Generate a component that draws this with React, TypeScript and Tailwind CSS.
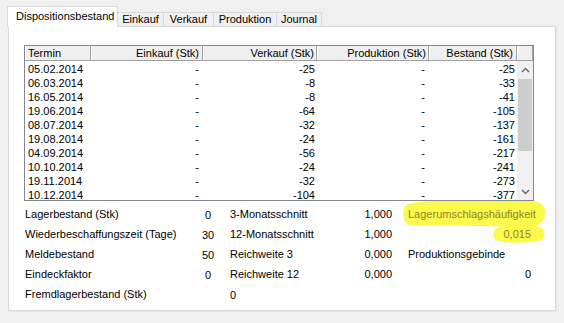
import React from "react";

const rows: [string, string, string][] = [
  ["05.02.2014", "-25", "-25"],
  ["06.03.2014", "-8", "-33"],
  ["16.05.2014", "-8", "-41"],
  ["19.06.2014", "-64", "-105"],
  ["08.07.2014", "-32", "-137"],
  ["19.08.2014", "-24", "-161"],
  ["04.09.2014", "-56", "-217"],
  ["10.10.2014", "-24", "-241"],
  ["19.11.2014", "-32", "-273"],
  ["10.12.2014", "-104", "-377"],
];

const hdr =
  "h-full flex items-center border-r border-[#a0a0a0] bg-[#efefef] shadow-[inset_1px_0_0_#ffffff]";

function Chevron({ up }: { up?: boolean }) {
  return (
    <svg width="9" height="6" viewBox="0 0 9 6">
      <polyline
        points={up ? "1,5 4.5,1.5 8,5" : "1,1 4.5,4.5 8,1"}
        fill="none"
        stroke="#606060"
        strokeWidth="1.3"
      />
    </svg>
  );
}

export default function App() {
  return (
    <div className="w-[564px] h-[323px] bg-[#f0f0f0] overflow-hidden text-[11px] text-black font-['Liberation_Sans',Arial,sans-serif] pt-[6px] pl-[7px]">
      {/* Tabs */}
      <div className="flex items-end h-[20px] relative z-10">
        <div className="w-[111px] h-[21px] -mb-px bg-white border border-b-0 border-[#d9d9d9] pl-[8px] pt-[4px] leading-[11px]">
          Dispositionsbestand
        </div>
        <div className="w-[46px] h-[14px] border-t border-r border-[#d9d9d9] text-center leading-[11px] pt-px">
          Einkauf
        </div>
        <div className="w-[50px] h-[14px] border-t border-r border-[#d9d9d9] text-center leading-[11px] pt-px">
          Verkauf
        </div>
        <div className="w-[63px] h-[14px] border-t border-r border-[#d9d9d9] text-center leading-[11px] pt-px">
          Produktion
        </div>
        <div className="w-[45px] h-[14px] border-t border-r border-[#d9d9d9] text-center leading-[11px] pt-px">
          Journal
        </div>
      </div>

      {/* Panel */}
      <div className="ml-px w-[548px] h-[285px] bg-white border border-[#d9d9d9] shadow-[1px_1px_0_#e6e6e6] pl-[15px] pt-[18px]">
        {/* Table */}
        <div className="w-[510px] h-[156px] border border-[#828790] overflow-hidden flex flex-col">
          <div className="flex h-[15px] border-b border-[#a0a0a0] leading-[14px] shrink-0">
            <div className={`${hdr} w-[66px] pl-[3px]`}>Termin</div>
            <div className={`${hdr} w-[112px] justify-end pr-[3px]`}>Einkauf (Stk)</div>
            <div className={`${hdr} w-[114px] justify-end pr-[2px]`}>Verkauf (Stk)</div>
            <div className={`${hdr} w-[112px] justify-end pr-[2px]`}>Produktion (Stk)</div>
            <div className={`${hdr} w-[88px] justify-end pr-[3px]`}>Bestand (Stk)</div>
            <div className={`${hdr} w-[16px]`}></div>
          </div>
          <div className="flex flex-1 overflow-hidden">
            <div className="w-[492px] pt-px">
              {rows.map(([d, v, b]) => (
                <div key={d} className="flex h-[14px] leading-[14px]">
                  <div className="w-[66px] pl-[3px]">{d}</div>
                  <div className="w-[112px] text-right pr-[4px]">-</div>
                  <div className="w-[114px] text-right pr-[2px]">{v}</div>
                  <div className="w-[112px] text-right pr-[4px]">-</div>
                  <div className="w-[88px] text-right pr-[2px]">{b}</div>
                </div>
              ))}
            </div>
            <div className="w-[16px] bg-[#f0f0f0] flex flex-col">
              <div className="h-[17px] flex items-center justify-center">
                <Chevron up />
              </div>
              <div className="h-[72px] mt-px mx-px bg-[#cdcdcd]"></div>
              <div className="flex-1"></div>
              <div className="h-[17px] flex items-center justify-center">
                <Chevron />
              </div>
            </div>
          </div>
        </div>

        {/* Bottom info */}
        <div className="relative">
          <svg
            className="absolute left-0 top-0"
            width="540"
            height="110"
            viewBox="24 201 540 110"
          >
            <path
              d="M408,204 C420,200 470,199 520,199 C540,199 546,206 545,214 C544,224 536,228 525,227 C490,226 440,226 410,225 C402,224 401,206 408,204 Z"
              fill="#fbf94c"
            />
            <path
              d="M500,227 C510,225 535,224 542,228 C547,233 544,242 535,242 C520,243 505,243 498,241 C491,238 492,229 500,227 Z"
              fill="#fbf94c"
            />
          </svg>
          <div className="relative pt-[3px] pl-px">
            {[
              ["Lagerbestand (Stk)", "0", "3-Monatsschnitt", "1,000", "lag"],
              ["Wiederbeschaffungszeit (Tage)", "30", "12-Monatsschnitt", "1,000", "val"],
              ["Meldebestand", "50", "Reichweite 3", "0,000", "prod"],
              ["Eindeckfaktor", "0", "Reichweite 12", "0,000", "zero"],
            ].map(([l, v, l3, v3, k]) => (
              <div key={l} className="flex h-[20px] items-center">
                <div className="w-[171px]">{l}</div>
                <div className="w-[24px] text-center mt-[3px]">{v}</div>
                <div className="w-[162px] ml-[10px] flex justify-between">
                  <span>{l3}</span>
                  <span>{v3}</span>
                </div>
                <div className="w-[123px] ml-[16px]">
                  {k === "lag" && (
                    <span className="text-[#8f8620]">Lagerumschlagshäufigkeit</span>
                  )}
                  {k === "val" && (
                    <div className="text-right text-[#8f8620]">0,015</div>
                  )}
                  {k === "prod" && <span>Produktionsgebinde</span>}
                  {k === "zero" && <div className="text-right">0</div>}
                </div>
              </div>
            ))}
            <div className="flex h-[20px] items-center">
              <div className="w-[171px]">Fremdlagerbestand (Stk)</div>
              <div className="w-[24px]"></div>
              <div className="ml-[10px] mt-[3px]">0</div>
            </div>
          </div>
        </div>
      </div>
    </div>
  );
}
